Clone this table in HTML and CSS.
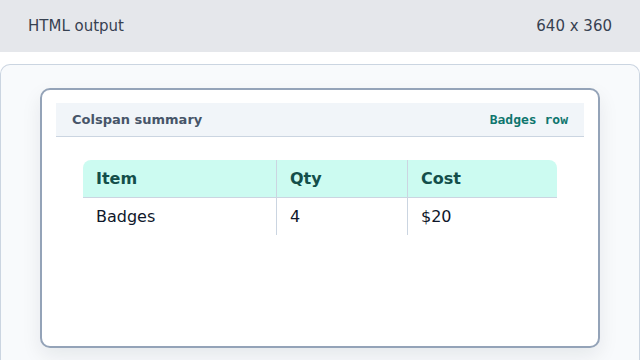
FILE: index.html
```html
<!DOCTYPE html>
<html>
<head>
<meta charset="utf-8">
<link rel="stylesheet" href="styles.css">
</head>
<body>
<header class="topbar">
  <span class="topbar-title">HTML output</span>
  <span class="topbar-size">640 x 360</span>
</header>
<main class="panel">
  <section class="card">
    <div class="card-head">
      <span class="card-title">Colspan summary</span>
      <code class="card-tag">Badges row</code>
    </div>
    <table class="summary">
      <thead>
        <tr>
          <th class="col-item">Item</th>
          <th class="col-qty">Qty</th>
          <th class="col-cost">Cost</th>
        </tr>
      </thead>
      <tbody>
        <tr>
          <td>Badges</td>
          <td>4</td>
          <td>$20</td>
        </tr>
      </tbody>
    </table>
  </section>
</main>
</body>
</html>
```
FILE: styles.css
```css
* { box-sizing: border-box; }
html, body { margin: 0; padding: 0; }
body {
  width: 640px;
  height: 360px;
  overflow: hidden;
  background: #ffffff;
  font-family: "DejaVu Sans", "Liberation Sans", sans-serif;
}
.topbar {
  height: 52px;
  background: #e5e7eb;
  display: flex;
  align-items: center;
  justify-content: space-between;
  padding: 0 28px;
  font-size: 15px;
  color: #374151;
}
.panel {
  margin-top: 12px;
  height: 296px;
  border: 1px solid #cbd5e1;
  border-bottom: none;
  border-radius: 10px 10px 0 0;
  background: #f8fafc;
  padding: 23px 39px 0 39px;
}
.card {
  height: 260px;
  background: #ffffff;
  border: 2px solid #94a3b8;
  border-radius: 10px;
  box-shadow: 0 8px 20px rgba(15, 23, 42, 0.08);
  padding: 13px 14px 14px 14px;
}
.card-head {
  height: 34px;
  background: #f1f5f9;
  border-bottom: 1px solid #cbd5e1;
  display: flex;
  align-items: center;
  justify-content: space-between;
  padding: 0 16px;
}
.card-title {
  font-size: 13px;
  font-weight: bold;
  color: #475569;
}
.card-tag {
  font-family: "DejaVu Sans Mono", "Liberation Mono", monospace;
  font-size: 13px;
  font-weight: bold;
  color: #0f766e;
}
.summary {
  width: 474px;
  margin: 23px auto 0 auto;
  border-collapse: separate;
  border-spacing: 0;
  table-layout: fixed;
  font-size: 16px;
}
.summary th, .summary td {
  text-align: left;
  height: 37px;
  padding: 0 12px 0 13px;
  border-left: 1px solid #cbd5e1;
}
.summary th:first-child, .summary td:first-child { border-left: none; }
.summary th {
  background: #ccfbf1;
  color: #134e4a;
  font-weight: bold;
  border-bottom: 1px solid #cbd5e1;
  height: 38px;
}
.summary th:first-child { border-top-left-radius: 8px; }
.summary th:last-child { border-top-right-radius: 8px; }
.summary td { color: #0f172a; }
.col-item { width: 193px; }
.col-qty { width: 131px; }
.col-cost { width: 150px; }
```
